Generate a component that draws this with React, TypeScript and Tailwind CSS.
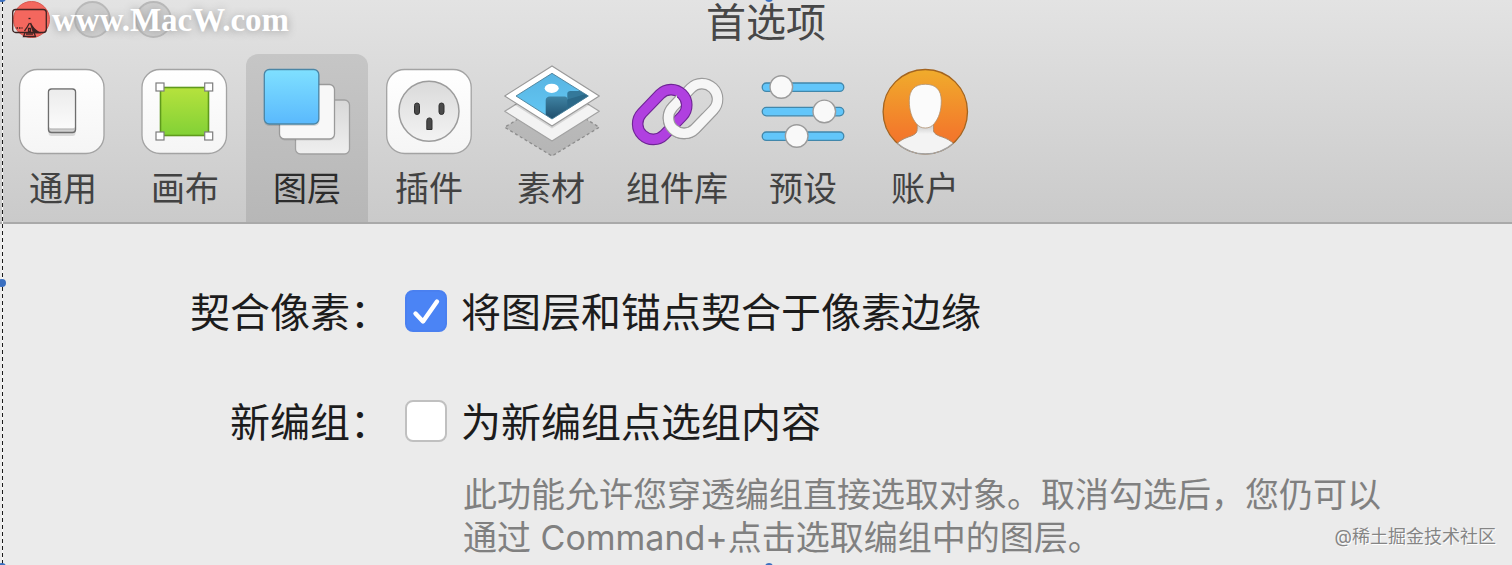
import React, { useState } from 'react';
import { clsx } from 'clsx';

/** Toolbar drawings. All share one 98x92 canvas so the labels line up. */
function IconCanvas({ children }: { children: React.ReactNode }) {
  return (
    <svg viewBox="0 0 98 92" className="w-[98px] h-[92px] shrink-0" fill="none" aria-hidden="true">
      {children}
    </svg>
  );
}

function GeneralIcon() {
  return (
    <IconCanvas>
      <defs>
        <linearGradient id="general-plate" x1="0" y1="0" x2="0" y2="1">
          <stop stopColor="#ffffff" />
          <stop offset="1" stopColor="#f5f5f5" />
        </linearGradient>
        <linearGradient id="general-key" x1="0" y1="0" x2="0" y2="1">
          <stop stopColor="#ececec" />
          <stop offset="1" stopColor="#fbfbfb" />
        </linearGradient>
      </defs>
      <rect x="5.5" y="4.5" width="84.5" height="84" rx="18" fill="url(#general-plate)" stroke="#a3a3a3" strokeWidth="1.3" />
      <rect x="34.5" y="26" width="27" height="45" rx="3" fill="#000000" opacity="0.12" />
      <rect x="34.5" y="24" width="27" height="43.5" rx="3" fill="#d0d0d0" stroke="#6e6e6e" strokeWidth="1.4" />
      <rect x="35.3" y="24.8" width="25.4" height="39" rx="2.5" fill="url(#general-key)" />
      <path d="M36 64h24" stroke="#b0b0b0" strokeWidth="1" />
    </IconCanvas>
  );
}

function CanvasIcon() {
  return (
    <IconCanvas>
      <defs>
        <linearGradient id="canvas-fill" x1="0" y1="0" x2="0" y2="1">
          <stop stopColor="#b6e23d" />
          <stop offset="1" stopColor="#82d136" />
        </linearGradient>
      </defs>
      <rect x="6" y="4.5" width="84.5" height="84" rx="18" fill="url(#general-plate)" stroke="#a3a3a3" strokeWidth="1.3" />
      <rect x="24.5" y="22.5" width="48" height="48" fill="url(#canvas-fill)" stroke="#5f9a1c" strokeWidth="1.6" />
      {[24, 72.7].map((x) =>
        [22, 71].map((y) => (
          <rect key={`${x}-${y}`} x={x - 4} y={y - 4} width="8" height="8" fill="#ffffff" stroke="#7d7d7d" strokeWidth="1.2" />
        )),
      )}
    </IconCanvas>
  );
}

function LayersIcon() {
  return (
    <IconCanvas>
      <defs>
        <linearGradient id="layer-front" x1="0" y1="0" x2="0" y2="1">
          <stop stopColor="#7fe0ff" />
          <stop offset="1" stopColor="#5ab9fd" />
        </linearGradient>
        <linearGradient id="layer-back" x1="0" y1="0" x2="0" y2="1">
          <stop stopColor="#d8d8d8" />
          <stop offset="1" stopColor="#efefef" />
        </linearGradient>
      </defs>
      <rect x="37.5" y="35" width="54" height="54" rx="5" fill="url(#layer-back)" stroke="#a0a0a0" strokeWidth="1.3" />
      <rect x="21.5" y="21" width="55.5" height="54.5" rx="5" fill="#000000" opacity="0.1" />
      <rect x="21.5" y="19.5" width="55" height="54.5" rx="5" fill="#f8f8f8" stroke="#9a9a9a" strokeWidth="1.3" />
      <rect x="6" y="6" width="55.5" height="55" rx="5" fill="#000000" opacity="0.12" />
      <rect x="6.3" y="4.5" width="54.5" height="54.5" rx="5" fill="url(#layer-front)" stroke="#4b86a6" strokeWidth="1.3" />
    </IconCanvas>
  );
}

function PluginsIcon() {
  return (
    <IconCanvas>
      <defs>
        <linearGradient id="socket" x1="0" y1="0" x2="0" y2="1">
          <stop stopColor="#dadada" />
          <stop offset="1" stopColor="#f3f3f3" />
        </linearGradient>
      </defs>
      <rect x="6.7" y="4.5" width="84.5" height="84" rx="18" fill="url(#general-plate)" stroke="#a3a3a3" strokeWidth="1.3" />
      <circle cx="49" cy="46.3" r="30" fill="url(#socket)" stroke="#9c9c9c" strokeWidth="1.5" />
      <g fill="#4a4a4a" stroke="#2f2f2f" strokeWidth="1">
        <rect x="34.5" y="38" width="5" height="11.5" rx="2.5" />
        <rect x="59" y="38" width="5" height="11.5" rx="2.5" />
        <path d="M46.8 64.5v-9a2.6 2.6 0 0 1 5.2 0v9z" />
      </g>
    </IconCanvas>
  );
}

function AssetsIcon() {
  return (
    <IconCanvas>
      <defs>
        <linearGradient id="sky" x1="0" y1="0" x2="0" y2="1">
          <stop stopColor="#58b4e2" />
          <stop offset="1" stopColor="#63c8f5" />
        </linearGradient>
        <linearGradient id="hill" x1="0" y1="0" x2="0" y2="1">
          <stop stopColor="#3f83a3" />
          <stop offset="1" stopColor="#1c4a68" />
        </linearGradient>
        <clipPath id="photo-clip">
          <path d="M50 8.3 86.3 31 50 54 14 31z" />
        </clipPath>
      </defs>
      <path d="M50 33 97.3 62.3 50 91 2.7 62.3z" fill="#000000" fillOpacity="0.13" stroke="#8c8c8c" strokeWidth="1.3" strokeDasharray="3 2.6" />
      <path d="M50 16.5 97.3 46.3 50 76 2.7 46.3z" fill="#f3f3f3" stroke="#a2a2a2" strokeWidth="1.2" strokeLinejoin="round" />
      <path d="M12 39.500 50 63.500 88 39.500 82 37H18z" fill="#000000" opacity="0.12" />
      <path d="M50 .9 97.3 31 50 61 2.7 31z" fill="#ffffff" stroke="#9a9a9a" strokeWidth="1.2" strokeLinejoin="round" />
      <path d="M50 8.3 86.3 31 50 54 14 31z" fill="url(#sky)" />
      <g clipPath="url(#photo-clip)">
        <path d="M65.3 34v-5.5c0-1.5 1.5-2.5 3-2.5h20v15L62 52z" fill="#34789a" />
        <path d="M43.7 56V35c0-2.3 2-3.6 4-3.6h15c1.7 0 2.6 1.2 2.6 2.6V56z" fill="url(#hill)" />
        <path d="M65.3 46V34.5L87 28v5z" fill="#2b6888" />
      </g>
      <ellipse cx="49.7" cy="23.3" rx="7" ry="4.6" fill="#ffffff" />
      <path d="M50 8.3 86.3 31 50 54 14 31z" stroke="#4d7f97" strokeWidth="0.9" />
    </IconCanvas>
  );
}

function LinkRing({ cx, cy, edge, fill }: { cx: number; cy: number; edge: string; fill: string }) {
  const ring = { x: cx - 28.5, y: cy - 15.6, width: 57, height: 31.2, rx: 15.6 };
  return (
    <g transform={`rotate(-46 ${cx} ${cy})`}>
      <rect {...ring} stroke={edge} strokeWidth="11.6" />
      <rect {...ring} stroke={fill} strokeWidth="9.4" />
    </g>
  );
}

function LibrariesIcon() {
  return (
    <IconCanvas>
      <defs>
        <clipPath id="link-overlap">
          <path d="M30 30h19v18H98v44H30z" />
        </clipPath>
      </defs>
      <LinkRing cx={65} cy={43.5} edge="#9b9b9b" fill="#f6f6f6" />
      <LinkRing cx={34.2} cy={49.5} edge="#6f2595" fill="#b040e0" />
      <g clipPath="url(#link-overlap)">
        <LinkRing cx={65} cy={43.5} edge="#9b9b9b" fill="#f6f6f6" />
      </g>
    </IconCanvas>
  );
}

function PresetsIcon() {
  const sliders = [
    { y: 22, knob: 27.3 },
    { y: 46.4, knob: 70.3 },
    { y: 71, knob: 42.7 },
  ];
  return (
    <IconCanvas>
      {sliders.map(({ y, knob }) => (
        <g key={y}>
          <rect x="8.2" y={y - 4} width="81.6" height="8.4" rx="4.2" fill="#62c6fa" stroke="#4187ab" strokeWidth="1.3" />
          <circle cx={knob} cy={y} r="11.3" fill="#f9f9f9" stroke="#9b9b9b" strokeWidth="1.4" />
        </g>
      ))}
    </IconCanvas>
  );
}

function AccountIcon() {
  return (
    <IconCanvas>
      <defs>
        <linearGradient id="account-bg" x1="0" y1="0" x2="0" y2="1">
          <stop stopColor="#f0ac2c" />
          <stop offset="0.75" stopColor="#f37a2b" />
          <stop offset="1" stopColor="#f0702c" />
        </linearGradient>
        <linearGradient id="account-neck" x1="0" y1="0" x2="0" y2="1">
          <stop stopColor="#cccccc" />
          <stop offset="1" stopColor="#f3f3f3" />
        </linearGradient>
        <clipPath id="account-clip">
          <circle cx="49.3" cy="46.7" r="42" />
        </clipPath>
      </defs>
      <circle cx="49.3" cy="46.7" r="42.2" fill="url(#account-bg)" stroke="#a3641f" strokeWidth="1.3" />
      <g clipPath="url(#account-clip)">
        <path d="M41.3 58v6.500c0 4-4 6-9 7.500-5 1.800-8 3.500-12 7V92h58V79c-4-3.500-7-5.200-12-7-5-1.500-9-3.500-9-7.500V58z" fill="#f3f3f3" stroke="#a98a6c" strokeWidth="1" />
        <path d="M41.800 60.500h15v8.500h-15z" fill="url(#account-neck)" />
      </g>
      <path d="M49.300 19.300c10.500 0 16 5.500 16 16.500 0 10-2.500 17.200-7 22.700-2.600 3.200-5.200 4.500-9 4.500s-6.400-1.300-9-4.500c-4.500-5.500-7-12.700-7-22.700 0-11 5.500-16.500 16-16.500z" fill="#fbfbfb" stroke="#b09070" strokeWidth="0.8" />
      <path d="M21.500 78.500a42.200 42.200 0 0 0 55.600 0" stroke="#a3a3a3" strokeWidth="1.4" />
    </IconCanvas>
  );
}

interface ToolbarTab {
  label: string;
  icon: React.ComponentType;
  wide?: boolean;
}

const tabs: ToolbarTab[] = [
  { label: '通用', icon: GeneralIcon },
  { label: '画布', icon: CanvasIcon },
  { label: '图层', icon: LayersIcon },
  { label: '插件', icon: PluginsIcon },
  { label: '素材', icon: AssetsIcon },
  { label: '组件库', icon: LibrariesIcon, wide: true },
  { label: '预设', icon: PresetsIcon },
  { label: '账户', icon: AccountIcon },
];

function TabButton({ tab, active, onClick }: { tab: ToolbarTab; active: boolean; onClick: () => void }) {
  const Icon = tab.icon;
  return (
    <button
      role="tab"
      aria-selected={active}
      onClick={onClick}
      className={clsx(
        'flex flex-col items-center gap-[11px] pt-[11px] pb-[13px] rounded-t-xl shrink-0 text-[34px] leading-[41px]',
        tab.wide ? 'w-[130px]' : 'w-[122px]',
        active ? 'bg-linear-to-b from-[#c6c6c6] to-[#b7b7b7] text-[#2c2c2c]' : 'text-[#424242]',
      )}
    >
      <Icon />
      <span className="whitespace-nowrap">{tab.label}</span>
    </button>
  );
}

function CheckBox({ id, checked, onChange }: { id: string; checked: boolean; onChange: (next: boolean) => void }) {
  return (
    <span className="relative block size-[42px] shrink-0">
      <input
        id={id}
        type="checkbox"
        checked={checked}
        onChange={(e) => onChange(e.target.checked)}
        className="block size-full appearance-none rounded-lg border-2 border-[#c0c0c0] bg-white checked:border-[#4a80f0] checked:bg-[#4b84f5]"
      />
      {checked && (
        <svg viewBox="0 0 42 42" className="absolute inset-0 pointer-events-none" fill="none" aria-hidden="true">
          <path d="M10.500 23.500 18 31.500 32 11.500" stroke="#ffffff" strokeWidth="4.400" strokeLinecap="round" strokeLinejoin="round" />
        </svg>
      )}
    </span>
  );
}

interface SettingRowProps {
  id: string;
  title: string;
  label: string;
  checked: boolean;
  onChange: (next: boolean) => void;
}

function SettingRow({ id, title, label, checked, onChange }: SettingRowProps) {
  return (
    <div className="flex items-start text-[40px] leading-[46px] text-[#1c1c1c]">
      <div className="w-[390px] shrink-0 text-right">{title}</div>
      <div className="flex items-start gap-[14px] pl-[15px]">
        <CheckBox id={id} checked={checked} onChange={onChange} />
        <label htmlFor={id} className="whitespace-nowrap">{label}</label>
      </div>
    </div>
  );
}

/** Mac logo and site name stamped over the window buttons. */
function SiteMark() {
  return (
    <div className="absolute left-3 top-0 flex items-center pointer-events-none">
      <svg viewBox="0 0 36 38" className="w-[36px] h-[38px]" fill="none" stroke="#3d2322" strokeWidth="1.3" aria-hidden="true">
        <rect x="0.700" y="8.500" width="33.600" height="23" rx="3" />
        <path d="M13 31.500 11.500 35.500h12L22 31.500" />
        <path d="M17.500 22c-2 4-3.500 6-5 8" />
        <path d="M18.500 22c1.500 4 4.500 7 8.500 9.500h-5.500z" fill="#3d2322" />
        <path d="M4.500 27h6" strokeDasharray="1.500 1" />
        <path d="M16.500 27.500h2v3h-2zM14 33h7" />
        <path d="M16.500 17.500h2" />
      </svg>
      <span className="pl-1 font-['Liberation_Serif'] text-[33px] leading-10 font-bold text-white [text-shadow:0_1px_8px_#999]">
        www.MacW.com
      </span>
    </div>
  );
}

function Handle({ className }: { className: string }) {
  return <span className={clsx('absolute size-2 rounded-full bg-[#3a6fc0]', className)} />;
}

/** Dashed selection edge with its grab points. */
function SelectionFrame() {
  return (
    <div className="absolute inset-0 pointer-events-none overflow-hidden" aria-hidden="true">
      <div className="absolute left-0.5 inset-y-0 w-px bg-[repeating-linear-gradient(to_bottom,#1a1a1a_0_4px,#fafafa_4px_7px)]" />
      <Handle className="-left-0.5 -top-1.5" />
      <Handle className="-left-0.5 top-1/2 -translate-y-1/2" />
      <Handle className="-left-0.5 -bottom-1.5" />
      <Handle className="left-[765px] -top-1.5" />
      <Handle className="left-[765px] -bottom-1.5" />
    </div>
  );
}

export default function App() {
  const [activeTab, setActiveTab] = useState('图层');
  const [pixelFit, setPixelFit] = useState(true);
  const [groupClick, setGroupClick] = useState(false);

  return (
    <div className="relative min-h-screen overflow-hidden bg-[#ebebeb] font-['Inter','Noto_Sans_CJK_SC',sans-serif]">
      <header className="border-b-2 border-[#a9a9a9] bg-linear-to-b from-[#e3e3e3] to-[#cacaca]">
        <div className="relative grid h-[54px] grid-cols-[1fr_auto_1fr] items-start">
          <div className="flex gap-6 pl-[13px] pt-px">
            <button aria-label="关闭" className="size-[37px] rounded-full border border-[#d9574f] bg-[#f4675e]" />
            <button aria-label="最小化" className="size-[37px] rounded-full border-2 border-[#b9b9b9] bg-[#cfcfcf]" />
            <button aria-label="缩放" className="size-[37px] rounded-full border-2 border-[#b9b9b9] bg-[#cfcfcf]" />
          </div>
          <h1 className="pl-5 text-[40px] leading-[46px] text-[#474747]">首选项</h1>
          <SiteMark />
        </div>

        <div role="tablist" className="flex pl-0.5">
          {tabs.map((tab) => (
            <TabButton key={tab.label} tab={tab} active={tab.label === activeTab} onClick={() => setActiveTab(tab.label)} />
          ))}
        </div>
      </header>

      <main className="pt-[66px]">
        <div className="flex flex-col gap-16">
          <SettingRow id="pixel-fit" title="契合像素：" label="将图层和锚点契合于像素边缘" checked={pixelFit} onChange={setPixelFit} />
          <SettingRow id="group-click" title="新编组：" label="为新编组点选组内容" checked={groupClick} onChange={setGroupClick} />
        </div>
        <p className="mt-[27px] pl-[463px] text-[34px] leading-[43px] text-[#808080]">
          此功能允许您穿透编组直接选取对象。取消勾选后，您仍可以
          <br />
          通过 Command+点击选取编组中的图层。
        </p>
      </main>

      <span className="absolute right-4 bottom-4 text-[18px] leading-6 text-[#858585] [text-shadow:1px_1px_0_#fff]">
        @稀土掘金技术社区
      </span>
      <SelectionFrame />
    </div>
  );
}
